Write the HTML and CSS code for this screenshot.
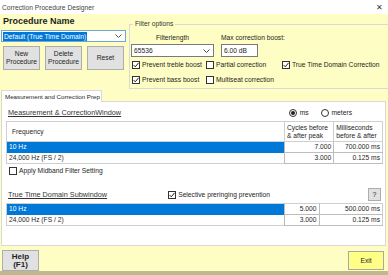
FILE: index.html
```html
<!DOCTYPE html>
<html lang="en">
<head>
  <meta charset="UTF-8">
  <title>Correction Procedure Designer</title>
  <link rel="stylesheet" href="styles.css">
</head>
<body>
  <div class="window">
    <div class="titlebar">
      <span>Correction Procedure Designer</span>
      <span class="close">&#x2715;</span>
    </div>

    <div class="top">
      <div class="proc">
        <div class="proc-title">Procedure Name</div>
        <div class="combo proc-combo">
          <span class="selected">Default (True Time Domain)</span>
          <svg class="chev" width="7" height="4" viewBox="0 0 7 4"><path d="M0.5 0.5 L3.5 3.5 L6.5 0.5" fill="none" stroke="#555" stroke-width="1"/></svg>
        </div>
        <div class="btn-row">
          <button class="btn">New<br>Procedure</button>
          <button class="btn">Delete<br>Procedure</button>
          <button class="btn">Reset</button>
        </div>
      </div>

      <fieldset class="filter">
        <legend>Filter options</legend>
        <div class="fl-row">
          <div class="fl-col fl-length">
            <div class="fl-label center">Filterlength</div>
            <div class="combo fl-combo">
              <span>65536</span>
              <svg class="chev" width="7" height="4" viewBox="0 0 7 4"><path d="M0.5 0.5 L3.5 3.5 L6.5 0.5" fill="none" stroke="#555" stroke-width="1"/></svg>
            </div>
          </div>
          <div class="fl-col fl-boost">
            <div class="fl-label">Max correction boost:</div>
            <div class="textbox">6.00 dB</div>
          </div>
        </div>
        <div class="cb-grid">
          <label class="check"><span class="cb on"><svg width="6" height="6" viewBox="0 0 6 6"><path d="M0.5 3 L2.3 4.8 L5.6 0.8" fill="none" stroke="#222" stroke-width="1"/></svg></span>Prevent treble boost</label>
          <label class="check"><span class="cb"></span>Partial correction</label>
          <label class="check"><span class="cb on"><svg width="6" height="6" viewBox="0 0 6 6"><path d="M0.5 3 L2.3 4.8 L5.6 0.8" fill="none" stroke="#222" stroke-width="1"/></svg></span>True Time Domain Correction</label>
          <label class="check"><span class="cb on"><svg width="6" height="6" viewBox="0 0 6 6"><path d="M0.5 3 L2.3 4.8 L5.6 0.8" fill="none" stroke="#222" stroke-width="1"/></svg></span>Prevent bass boost</label>
          <label class="check"><span class="cb"></span>Multiseat correction</label>
        </div>
      </fieldset>
    </div>

    <div class="tabs">
      <div class="tab">Measurement and Correction Prep</div>
      <div class="panel">
        <div class="section-row">
          <span class="section-title">Measurement &amp; CorrectionWindow</span>
          <div class="radios">
            <label class="radio"><span class="rb on"></span>ms</label>
            <label class="radio"><span class="rb"></span>meters</label>
          </div>
        </div>

        <table class="grid">
          <tr class="head">
            <td class="c-freq">Frequency</td>
            <td class="c-num">Cycles before<br>&amp; after peak</td>
            <td class="c-num">Milliseconds<br>before &amp; after</td>
          </tr>
          <tr>
            <td class="c-freq sel">10 Hz</td>
            <td class="val">7.000</td>
            <td class="val">700.000 ms</td>
          </tr>
          <tr>
            <td class="c-freq">24,000 Hz (FS / 2)</td>
            <td class="val">3.000</td>
            <td class="val">0.125 ms</td>
          </tr>
        </table>

        <label class="check midband"><span class="cb"></span>Apply Midband Filter Setting</label>

        <div class="section-row second">
          <span class="section-title">True Time Domain Subwindow</span>
          <div class="sub-right">
            <label class="check"><span class="cb on"><svg width="6" height="6" viewBox="0 0 6 6"><path d="M0.5 3 L2.3 4.8 L5.6 0.8" fill="none" stroke="#222" stroke-width="1"/></svg></span>Selective preringing prevention</label>
            <button class="qbtn">?</button>
          </div>
        </div>

        <table class="grid sub">
          <tr>
            <td class="c-freq sel">10 Hz</td>
            <td class="val">5.000</td>
            <td class="val">500.000 ms</td>
          </tr>
          <tr>
            <td class="c-freq">24,000 Hz (FS / 2)</td>
            <td class="val">3.000</td>
            <td class="val">0.125 ms</td>
          </tr>
        </table>
      </div>
    </div>

    <div class="footer">
      <button class="btn help">Help<br>(F1)</button>
      <button class="btn exit">Exit</button>
    </div>
    <div class="strip"></div>
  </div>
</body>
</html>
```

FILE: styles.css
```css
:root {
  --yellow: #fdfdc4;
  --btn: #e1e1e1;
  --btn-border: #adadad;
  --line: #d9d9d9;
  --select: #0078d7;
  --text: #1e1e1e;
}

* {
  box-sizing: border-box;
  margin: 0;
  padding: 0;
}

body {
  font-family: 'Liberation Sans', Arial, sans-serif;
  font-size: 6.7px;
  color: var(--text);
  background: var(--yellow);
}

.window {
  width: 388px;
  height: 275px;
  overflow: hidden;
  background: var(--yellow);
}

.titlebar {
  height: 14px;
  background: #fff;
  display: flex;
  justify-content: space-between;
  align-items: center;
  padding: 0 5px 0 2px;
  color: #444;
}

.close {
  font-size: 8px;
  color: #333;
}

/* top area */

.top {
  display: flex;
  height: 76px;
}

.proc {
  width: 128px;
  padding-left: 1px;
}

.proc-title {
  font-size: 9px;
  font-weight: bold;
  line-height: 12px;
  padding: 1px 0 0 2px;
}

.combo {
  display: flex;
  align-items: center;
  justify-content: space-between;
  background: #fff;
  border: 1px solid #7a7a7a;
  padding: 0 3px 0 1px;
}

.proc-combo {
  width: 125px;
  height: 12px;
  margin-top: 3px;
  border-color: #6fa6da;
}

.proc-combo .selected {
  background: var(--select);
  color: #fff;
  line-height: 9px;
  padding: 0 1px;
}

.btn-row {
  display: flex;
  gap: 5px;
  margin-top: 4px;
  padding-left: 2px;
}

.btn {
  font-family: inherit;
  font-size: 6.7px;
  line-height: 8px;
  color: var(--text);
  background: var(--btn);
  border: 1px solid var(--btn-border);
  width: 37px;
  height: 24px;
}

.filter {
  flex: 1;
  margin: 6px -6px 0 1px;
  height: 69px;
  border: 1px solid var(--line);
  min-width: 0;
  padding: 0;
}

.filter legend {
  margin-left: 3px;
  padding: 0 2px;
  line-height: 8px;
  color: #333;
}

.fl-row {
  display: flex;
  gap: 7px;
  padding-left: 1px;
  margin-top: 5px;
}

.fl-label {
  line-height: 9px;
  height: 10px;
}

.center {
  text-align: center;
}

.fl-length {
  width: 83px;
}

.fl-combo {
  height: 13px;
  margin-top: 1px;
  padding-left: 2px;
}

.textbox {
  width: 37px;
  height: 13px;
  margin-top: 1px;
  background: #fff;
  border: 1px solid #7a7a7a;
  line-height: 11px;
  padding-left: 2px;
}

.cb-grid {
  display: grid;
  grid-template-columns: 74px 76px auto;
  grid-auto-rows: 15px;
  padding-left: 2px;
}

.check {
  display: flex;
  align-items: center;
  gap: 2px;
  white-space: nowrap;
}

.cb {
  width: 8px;
  height: 8px;
  border: 1px solid #333;
  background: #fff;
  display: flex;
  align-items: center;
  justify-content: center;
  flex: none;
}

/* tab area */

.tabs {
  padding-left: 1px;
}

.tab {
  position: relative;
  z-index: 1;
  width: 101px;
  height: 12px;
  background: #fff;
  border: 1px solid var(--line);
  border-bottom: none;
  font-size: 6.2px;
  line-height: 11px;
  padding-left: 3px;
  margin-bottom: -1px;
  white-space: nowrap;
  overflow: hidden;
}

.panel {
  width: 385px;
  height: 145px;
  background: #fff;
  border: 1px solid var(--line);
  padding: 4px 0 0 4px;
}

.section-row {
  display: flex;
  justify-content: space-between;
  align-items: center;
  height: 13px;
  padding-left: 2px;
}

.section-title {
  text-decoration: underline;
  color: #333;
  font-size: 7.3px;
}

.radios {
  display: flex;
  gap: 12px;
  margin-right: 33px;
}

.radio {
  display: flex;
  align-items: center;
  gap: 3px;
}

.rb {
  width: 8px;
  height: 8px;
  border: 1px solid #333;
  border-radius: 50%;
  display: flex;
  align-items: center;
  justify-content: center;
}

.rb.on::after {
  content: '';
  width: 4px;
  height: 4px;
  border-radius: 50%;
  background: #222;
}

.grid {
  border-collapse: collapse;
  width: 377px;
  margin-top: 2px;
  border: 1px solid #cfcfcf;
}

.grid td {
  height: 11px;
  line-height: 10px;
  padding: 0 2px;
  white-space: nowrap;
}

.grid .head td {
  height: 20px;
  line-height: 8px;
  border-bottom: 1px solid #cfcfcf;
}

.grid .head .c-freq {
  padding-left: 5px;
}

.c-freq {
  width: 278px;
}

.c-num {
  border-left: 1px solid #cfcfcf;
  vertical-align: middle;
}

.val {
  text-align: right;
  border-left: 1px solid #bdbdbd;
  border-bottom: 1px solid #bdbdbd;
}

.grid td.sel {
  background: var(--select);
  color: #fff;
}

.midband {
  height: 13px;
  margin: 0 0 0 3px;
}

.section-row.second {
  margin-top: 11px;
}

.sub-right {
  display: flex;
  align-items: center;
}

.qbtn {
  width: 13px;
  height: 13px;
  margin: 0 4px 0 98px;
  background: var(--btn);
  border: 1px solid var(--btn-border);
  font-family: inherit;
  font-size: 7px;
  color: #222;
}

.grid.sub {
  margin-top: 2px;
}

/* footer */

.footer {
  display: flex;
  justify-content: space-between;
  align-items: flex-start;
  height: 25px;
  padding: 4px 4px 0 2px;
}

.help {
  font-weight: bold;
  font-size: 8px;
  line-height: 8px;
  height: 21px;
}

.exit {
  width: 36px;
  height: 19px;
  margin-top: 1px;
  background: #ffff86;
  border-color: #a8a8a8;
}

.strip {
  height: 4px;
  background: #bdb98d;
}
```
